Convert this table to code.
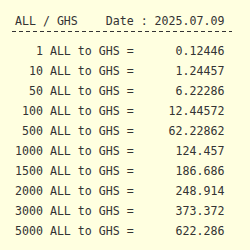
const rates: [number, string][] = [
  [1, "0.12446"],
  [10, "1.24457"],
  [50, "6.22286"],
  [100, "12.44572"],
  [500, "62.22862"],
  [1000, "124.457"],
  [1500, "186.686"],
  [2000, "248.914"],
  [3000, "373.372"],
  [5000, "622.286"],
];

export default function App() {
  return (
    <div className="h-[250px] w-[250px] overflow-hidden bg-[#ffffe0] pt-[11px] font-['DejaVu_Sans_Mono',monospace] text-[11.6px] leading-[20px] text-[#333]">
      <div className="whitespace-pre pl-[15px]">{"ALL / GHS    Date : 2025.07.09"}</div>
      <div className="ml-[12px] h-px w-[220px] bg-[repeating-linear-gradient(to_right,#333_0_4px,transparent_4px_7px)]" />
      <div className="mt-[9px] pl-[15px]">
        {rates.map(([amount, value]) => (
          <div key={amount} className="whitespace-pre">
            {String(amount).padStart(4, " ") + " ALL to GHS =" + value.padStart(13, " ")}
          </div>
        ))}
      </div>
    </div>
  );
}
